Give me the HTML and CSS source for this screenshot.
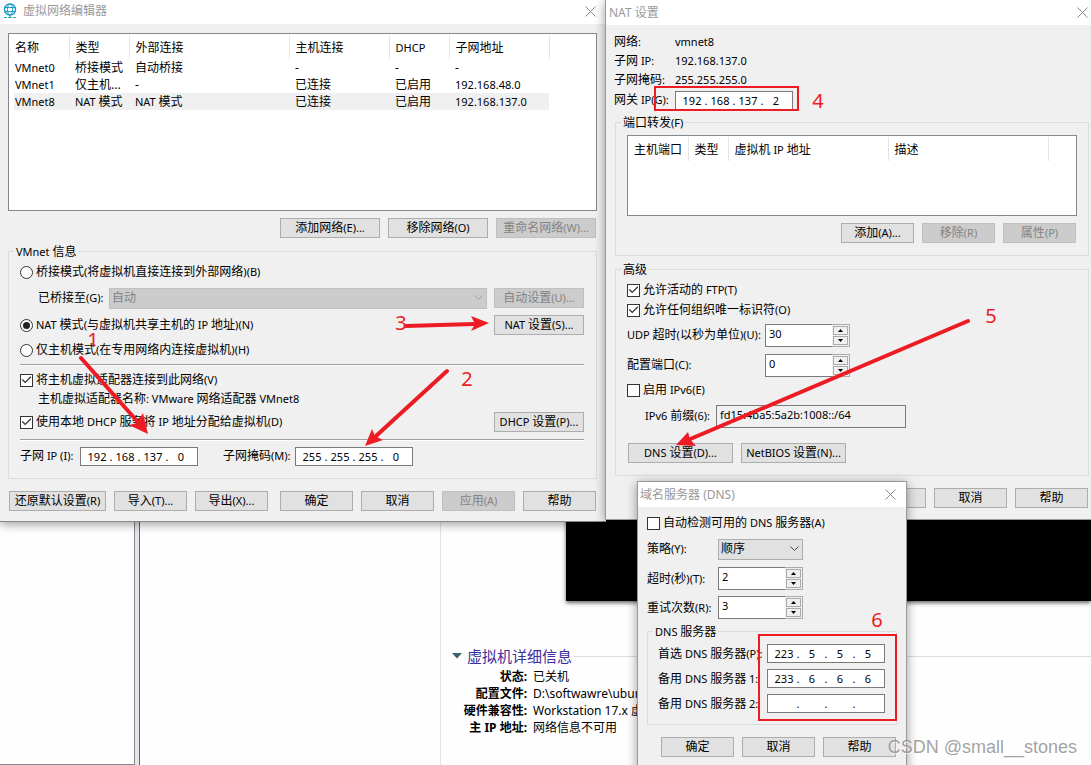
FILE: index.html
```html
<!DOCTYPE html>
<html lang="zh-CN">
<head>
<meta charset="utf-8">
<title>虚拟网络编辑器</title>
<link rel="stylesheet" href="styles.css">
</head>
<body>
<div class="desktop">

  <div class="workspace">
    <aside class="library"></aside>
    <div class="splitter"></div>
    <div class="devices"></div>
    <main class="summary">
      <div class="screen"></div>
      <section class="details">
        <h2 class="details-title">
          <svg width="10" height="6" viewBox="0 0 10 6" aria-hidden="true"><path d="M0 0h10L5 5.5z" fill="#41606e"/></svg>
          <span>虚拟机详细信息</span>
        </h2>
        <dl class="facts">
          <dt>状态:</dt><dd>已关机</dd>
          <dt>配置文件:</dt><dd>D:\softwawre\ubuntu</dd>
          <dt>硬件兼容性:</dt><dd>Workstation 17.x 虚拟机</dd>
          <dt>主 IP 地址:</dt><dd>网络信息不可用</dd>
        </dl>
      </section>
    </main>
  </div>

  <section class="window editor" aria-label="虚拟网络编辑器">
    <header class="titlebar">
      <svg class="app-icon" width="14" height="16" viewBox="0 0 14 16" fill="none" stroke="#1b9cc4" aria-hidden="true">
        <circle cx="7" cy="6.5" r="5.5" stroke-width="1.4"/>
        <ellipse cx="7" cy="6.5" rx="2.6" ry="5.5"/>
        <path d="M1.5 4.5h11M1.5 8.5h11M7 12v3"/>
        <path d="M1 14.5h3M5 14.5h4M10 14.5h3" stroke="#1fb39a"/>
      </svg>
      <h1 class="title">虚拟网络编辑器</h1>
      <button class="close" aria-label="关闭"><svg width="11" height="11" viewBox="0 0 11 11"><path d="M.5.5l10 10M10.5.5l-10 10" stroke="#8a8a8a"/></svg></button>
    </header>
    <div class="editor-body">
      <div class="list list-networks">
        <table class="table">
          <colgroup><col class="w60"><col class="w60"><col class="w160"><col class="w100"><col class="w60"><col class="w100"></colgroup>
          <thead><tr><th>名称</th><th>类型</th><th>外部连接</th><th>主机连接</th><th><span class="en">DHCP</span></th><th>子网地址</th></tr></thead>
          <tbody>
            <tr><td><span class="en">VMnet0</span></td><td>桥接模式</td><td>自动桥接</td><td>-</td><td>-</td><td>-</td></tr>
            <tr><td><span class="en">VMnet1</span></td><td>仅主机...</td><td>-</td><td>已连接</td><td>已启用</td><td><span class="en">192.168.48.0</span></td></tr>
            <tr class="selected"><td><span class="en">VMnet8</span></td><td><span class="en">NAT </span>模式</td><td><span class="en">NAT </span>模式</td><td>已连接</td><td>已启用</td><td><span class="en">192.168.137.0</span></td></tr>
          </tbody>
        </table>
      </div>
      <div class="buttons list-actions">
        <button class="btn w100">添加网络<span class="en">(E)...</span></button>
        <button class="btn w100">移除网络<span class="en">(O)</span></button>
        <button class="btn w100" disabled>重命名网络<span class="en">(W)...</span></button>
      </div>
      <fieldset class="group">
        <legend><span class="en">VMnet </span>信息</legend>
        <div class="info">
          <div class="row h24"><label class="option"><input type="radio" name="mode">桥接模式<span class="en">(</span>将虚拟机直接连接到外部网络<span class="en">)(B)</span></label></div>
          <div class="row h28 bridge">
            <label class="bridge-label" for="bridge">已桥接至<span class="en">(G):</span></label>
            <span class="combo combo-wide"><select id="bridge" disabled><option>自动</option></select><svg width="9" height="6" viewBox="0 0 9 6"><path d="M.5.5l4 4 4-4" fill="none" stroke="#a0a0a0"/></svg></span>
            <button class="btn w90" disabled>自动设置<span class="en">(U)...</span></button>
          </div>
          <div class="row h26 spread"><label class="option"><input type="radio" name="mode" checked><span class="en">NAT </span>模式<span class="en">(</span>与虚拟机共享主机的<span class="en"> IP </span>地址<span class="en">)(N)</span></label><button class="btn w90"><span class="en">NAT </span>设置<span class="en">(S)...</span></button></div>
          <div class="row h24"><label class="option"><input type="radio" name="mode">仅主机模式<span class="en">(</span>在专用网络内连接虚拟机<span class="en">)(H)</span></label></div>
          <hr class="rule rule-mode">
          <div class="row h20"><label class="option"><input type="checkbox" checked>将主机虚拟适配器连接到此网络<span class="en">(V)</span></label></div>
          <div class="row h18 indent">主机虚拟适配器名称<span class="en">: VMware </span>网络适配器<span class="en"> VMnet8</span></div>
          <div class="row h28 spread"><label class="option"><input type="checkbox" checked>使用本地<span class="en"> DHCP </span>服务将<span class="en"> IP </span>地址分配给虚拟机<span class="en">(D)</span></label><button class="btn w90"><span class="en">DHCP </span>设置<span class="en">(P)...</span></button></div>
          <hr class="rule rule-dhcp">
          <div class="row h30 subnet">
            <label for="subnet1">子网<span class="en"> IP (I):</span></label>
            <span class="ip"><input id="subnet1" value="192"><i>.</i><input aria-label="子网 IP 2" value="168"><i>.</i><input aria-label="子网 IP 3" value="137"><i>.</i><input aria-label="子网 IP 4" value="0"></span>
            <label class="mask-label" for="mask1">子网掩码<span class="en">(M):</span></label>
            <span class="ip"><input id="mask1" value="255"><i>.</i><input aria-label="掩码 2" value="255"><i>.</i><input aria-label="掩码 3" value="255"><i>.</i><input aria-label="掩码 4" value="0"></span>
          </div>
        </div>
      </fieldset>
      <div class="buttons editor-actions">
        <button class="btn w97">还原默认设置<span class="en">(R)</span></button>
        <button class="btn">导入<span class="en">(T)...</span></button>
        <button class="btn">导出<span class="en">(X)...</span></button>
        <span class="spacer"></span>
        <button class="btn">确定</button>
        <button class="btn">取消</button>
        <button class="btn" disabled>应用<span class="en">(A)</span></button>
        <button class="btn">帮助</button>
      </div>
    </div>
  </section>

  <section class="window nat" aria-label="NAT 设置">
    <header class="titlebar">
      <h1 class="title"><span class="ten">NAT </span>设置</h1>
      <button class="close" aria-label="关闭"><svg width="11" height="11" viewBox="0 0 11 11"><path d="M.5.5l10 10M10.5.5l-10 10" stroke="#8a8a8a"/></svg></button>
    </header>
    <div class="nat-body">
      <div class="nat-facts">
        <span>网络<span class="en">:</span></span><span class="en">vmnet8</span>
        <span>子网<span class="en"> IP:</span></span><span class="en">192.168.137.0</span>
        <span>子网掩码<span class="en">:</span></span><span class="en">255.255.255.0</span>
        <label for="gw1">网关<span class="en"> IP(G):</span></label>
        <span class="ip"><input id="gw1" value="192"><i>.</i><input aria-label="网关 2" value="168"><i>.</i><input aria-label="网关 3" value="137"><i>.</i><input aria-label="网关 4" value="2"></span>
      </div>
      <fieldset class="group group-forward">
        <legend>端口转发<span class="en">(F)</span></legend>
        <div class="forward">
          <div class="list list-ports">
            <table class="table">
              <colgroup><col class="w60"><col class="w40"><col class="w160"><col class="w160"></colgroup>
              <thead><tr><th>主机端口</th><th>类型</th><th>虚拟机<span class="en"> IP </span>地址</th><th>描述</th></tr></thead>
            </table>
          </div>
          <div class="buttons port-actions">
            <button class="btn">添加<span class="en">(A)...</span></button>
            <button class="btn" disabled>移除<span class="en">(R)</span></button>
            <button class="btn" disabled>属性<span class="en">(P)</span></button>
          </div>
        </div>
      </fieldset>
      <fieldset class="group group-advanced">
        <legend>高级</legend>
        <div class="advanced">
          <div class="row h20"><label class="option"><input type="checkbox" checked>允许活动的<span class="en"> FTP(T)</span></label></div>
          <div class="row h20"><label class="option"><input type="checkbox" checked>允许任何组织唯一标识符<span class="en">(O)</span></label></div>
          <div class="row h30"><label class="nat-label" for="udp"><span class="en">UDP </span>超时<span class="en">(</span>以秒为单位<span class="en">)(U):</span></label>
            <span class="spin"><input id="udp" value="30"><span class="arrows"><button aria-label="增加"><svg width="5" height="3"><path d="M0 3h5L2.500 0z"/></svg></button><button aria-label="减少"><svg width="5" height="3"><path d="M0 0h5L2.500 3z"/></svg></button></span></span></div>
          <div class="row h30"><label class="nat-label" for="port">配置端口<span class="en">(C):</span></label>
            <span class="spin"><input id="port" value="0"><span class="arrows"><button aria-label="增加"><svg width="5" height="3"><path d="M0 3h5L2.500 0z"/></svg></button><button aria-label="减少"><svg width="5" height="3"><path d="M0 0h5L2.500 3z"/></svg></button></span></span></div>
          <div class="row h20"><label class="option"><input type="checkbox">启用<span class="en"> IPv6(E)</span></label></div>
          <div class="row h32"><label class="prefix-label" for="prefix"><span class="en">IPv6 </span>前缀<span class="en">(6):</span></label><input class="prefix" id="prefix" value="fd15:4ba5:5a2b:1008::/64" readonly></div>
          <div class="buttons nat-more">
            <button class="btn w105"><span class="en">DNS </span>设置<span class="en">(D)...</span></button>
            <button class="btn w105"><span class="en">NetBIOS </span>设置<span class="en">(N)...</span></button>
          </div>
        </div>
      </fieldset>
      <div class="buttons nat-actions">
        <button class="btn">确定</button>
        <button class="btn">取消</button>
        <button class="btn">帮助</button>
      </div>
    </div>
  </section>

  <section class="window dns" aria-label="域名服务器 (DNS)">
    <header class="titlebar">
      <h1 class="title">域名服务器<span class="ten"> (DNS)</span></h1>
      <button class="close" aria-label="关闭"><svg width="11" height="11" viewBox="0 0 11 11"><path d="M.5.5l10 10M10.5.5l-10 10" stroke="#8a8a8a"/></svg></button>
    </header>
    <div class="dns-body">
      <div class="row h22"><label class="option"><input type="checkbox">自动检测可用的<span class="en"> DNS </span>服务器<span class="en">(A)</span></label></div>
      <div class="row h30"><label class="dns-label" for="policy">策略<span class="en">(Y):</span></label>
        <span class="combo combo-small"><select id="policy"><option>顺序</option></select><svg width="9" height="6" viewBox="0 0 9 6"><path d="M.5.5l4 4 4-4" fill="none" stroke="#444"/></svg></span></div>
      <div class="row h29"><label class="dns-label" for="timeout">超时<span class="en">(</span>秒<span class="en">)(T):</span></label>
        <span class="spin"><input id="timeout" value="2"><span class="arrows"><button aria-label="增加"><svg width="5" height="3"><path d="M0 3h5L2.500 0z"/></svg></button><button aria-label="减少"><svg width="5" height="3"><path d="M0 0h5L2.500 3z"/></svg></button></span></span></div>
      <div class="row h29"><label class="dns-label" for="retry">重试次数<span class="en">(R):</span></label>
        <span class="spin"><input id="retry" value="3"><span class="arrows"><button aria-label="增加"><svg width="5" height="3"><path d="M0 3h5L2.500 0z"/></svg></button><button aria-label="减少"><svg width="5" height="3"><path d="M0 0h5L2.500 3z"/></svg></button></span></span></div>
      <fieldset class="group group-dns">
        <legend><span class="en">DNS </span>服务器</legend>
        <div class="servers">
          <div class="row h25"><label class="server-label" for="p1">首选<span class="en"> DNS </span>服务器<span class="en">(P):</span></label>
            <span class="ip"><input id="p1" value="223"><i>.</i><input aria-label="首选 2" value="5"><i>.</i><input aria-label="首选 3" value="5"><i>.</i><input aria-label="首选 4" value="5"></span></div>
          <div class="row h25"><label class="server-label" for="a1">备用<span class="en"> DNS </span>服务器<span class="en"> 1:</span></label>
            <span class="ip"><input id="a1" value="233"><i>.</i><input aria-label="备用一 2" value="6"><i>.</i><input aria-label="备用一 3" value="6"><i>.</i><input aria-label="备用一 4" value="6"></span></div>
          <div class="row h25"><label class="server-label" for="b1">备用<span class="en"> DNS </span>服务器<span class="en"> 2:</span></label>
            <span class="ip"><input id="b1"><i>.</i><input aria-label="备用二 2"><i>.</i><input aria-label="备用二 3"><i>.</i><input aria-label="备用二 4"></span></div>
        </div>
      </fieldset>
      <div class="buttons dns-actions">
        <button class="btn">确定</button>
        <button class="btn">取消</button>
        <button class="btn">帮助</button>
      </div>
    </div>
  </section>

  <svg class="marks" width="1091" height="765" viewBox="0 0 1091 765">
    <g fill="none" stroke="#ed1c24" stroke-width="2">
      <rect x="655" y="87" width="143" height="23"/>
      <rect x="759" y="635" width="137" height="85"/>
    </g>
    <g stroke="#ed1c24" stroke-width="4" stroke-linecap="round">
      <path d="M81 358L137 421M447 371L376 436M406 326L474 324M968 321L688 440"/>
    </g>
    <g fill="#ed1c24">
      <path d="M148 434L129 425L137 423L143 413z"/>
      <path d="M365 446L372 429L375 436L383 440z"/>
      <path d="M489 323L471 331L475 324L471 316z"/>
      <path d="M676 445L688 432L690 439L696 446z"/>
    </g>
    <g class="digits" text-anchor="middle">
      <text x="93" y="347">1</text><text x="467" y="386">2</text><text x="401" y="330">3</text>
      <text x="818" y="108">4</text><text x="991" y="323">5</text><text x="877" y="627">6</text>
    </g>
  </svg>
  <div class="watermark">CSDN @small__stones</div>
</div>
</body>
</html>
```

FILE: styles.css
```css
* { box-sizing: border-box; }

body {
  margin: 0;
  overflow: hidden;
  background: #fff;
  color: #000;
  font: 12px/16px "Noto Sans", "Noto Sans CJK SC", sans-serif;
}

button, input, select { font: inherit; color: inherit; margin: 0; }

.en { font-size: 11px; white-space: pre; }
.ten { font-size: 12px; white-space: pre; }

.desktop { position: relative; min-height: 100vh; overflow: hidden; }

/* Main window behind the dialogs */
.workspace { display: flex; height: 100vh; background: #fefefe; }
.library { width: 135px; border-right: 1px solid #828790; border-bottom: 1px solid #828790; }
.splitter { width: 5px; background: #e3e5e9; border-right: 1px solid #646464; }
.devices { width: 301px; border-right: 1px solid #e2e2e2; }
.summary { flex: 1; padding-top: 500px; min-width: 0; }
.screen { height: 101px; margin-left: 125px; background: #000; box-shadow: 0 2px 4px #0009; }
.details { margin: 45px 0 0 11px; }
.details-title {
  display: flex;
  align-items: center;
  gap: 5px;
  margin: 0;
  color: #3c2f9c;
  font-size: 15px;
  font-weight: 400;
  line-height: 20px;
}
.details-title::after { content: ""; flex: 1; margin-left: -3px; border-top: 1px solid #ddd; }
.facts { display: grid; grid-template-columns: 75px 1fr; column-gap: 6px; margin: 2px 0 0; line-height: 17px; white-space: nowrap; }
.facts dt { text-align: right; font-weight: 700; }
.facts dd { margin: 0; }

/* Dialog windows */
.window { position: absolute; background: #f0f0f0; box-shadow: 0 2px 10px #0006; white-space: nowrap; }
.editor { left: 0; top: 0; width: 606px; border-bottom: 1px solid #888; }
.nat { left: 605px; top: 0; right: 0; border-left: 1px solid #999; border-bottom: 1px solid #999; }
.dns { left: 637px; top: 481px; width: 270px; border: 1px solid #999; border-bottom: 0; }

.titlebar { display: flex; align-items: center; height: 24px; background: #fff; padding: 0 10px 2px 3px; }
.nat .titlebar { height: 25px; padding: 0 3px 0 3px; }
.dns .titlebar { height: 25px; padding: 0 10px 0 2px; }
.app-icon { margin-right: 6px; }
.title { flex: 1; margin: 0; color: #999; font-size: 12px; font-weight: 400; line-height: 16px; }
.close { display: flex; padding: 0; border: 0; background: none; }

/* Controls */
.buttons { display: flex; justify-content: flex-end; gap: 8px; }
.btn {
  width: 73px;
  height: 20px;
  padding: 0;
  border: 1px solid #adadad;
  background: #e1e1e1;
  line-height: 18px;
  text-align: center;
  white-space: nowrap;
}
.btn:disabled { border-color: #bfbfbf; background: #ccc; color: #838383; }
.btn.w90 { width: 90px; }
.btn.w97 { width: 97px; }
.btn.w100 { width: 100px; }
.btn.w105 { width: 105px; }

.list { border: 1px solid #828790; background: #fff; padding: 1px 0; overflow: hidden; }
.table { table-layout: fixed; width: 0; border-collapse: collapse; }
col.w40 { width: 40px; }
col.w60 { width: 60px; }
col.w100 { width: 100px; }
col.w160 { width: 160px; }
.table th { height: 24px; padding: 1px 0 0 6px; border-right: 1px solid #e5e5e5; font-weight: 400; text-align: left; }
.table td { height: 17px; padding: 1px 0 0 6px; line-height: 16px; }
.selected td { background: #f0f0f0; }
.selected td:first-child { background: linear-gradient(to right, #fff 5px, #f0f0f0 5px); }

.group { min-width: 0; margin: 0; padding: 0; border: 1px solid #dcdcdc; }
.group legend { margin-left: 5px; padding: 1px 2px 0; height: 16px; line-height: 16px; }

.row { display: flex; align-items: center; }
.spread { justify-content: space-between; }
.h18 { height: 18px; }
.h20 { height: 20px; }
.h22 { height: 22px; }
.h24 { height: 24px; }
.h25 { height: 25px; }
.h26 { height: 26px; }
.h28 { height: 28px; }
.h29 { height: 29px; }
.h30 { height: 30px; }
.h32 { height: 32px; }

.option { display: flex; align-items: center; }
.option input {
  appearance: none;
  display: grid;
  place-items: center;
  width: 13px;
  height: 13px;
  margin-right: 3px;
  border: 1px solid #333;
  background: #fff;
}
.option input[type="radio"] { border-radius: 50%; }
.option input[type="radio"]:checked::before { content: ""; width: 7px; height: 7px; border-radius: 50%; background: #222; }
.option input[type="checkbox"]:checked::before {
  content: "";
  width: 11px;
  height: 11px;
  background: #333;
  clip-path: polygon(8% 50%, 16% 42%, 38% 64%, 86% 16%, 94% 24%, 38% 80%);
}

.combo { display: grid; align-items: center; height: 21px; }
.combo select, .combo svg { grid-area: 1 / 1; }
.combo svg { justify-self: end; margin-right: 4px; pointer-events: none; }
.combo select {
  appearance: none;
  width: 100%;
  height: 21px;
  padding: 0 2px;
  border: 1px solid #adadad;
  border-radius: 0;
  background: #e1e1e1;
  opacity: 1;
}
.combo select:disabled { border-color: #bfbfbf; background: #ccc; color: #838383; }
.combo-wide { flex: 1; margin-right: 7px; }
.combo-small { width: 85px; }

.ip { display: flex; align-items: center; width: 118px; height: 19px; padding: 1px 2px 0 4px; border: 1px solid #7a7a7a; background: #fff; font-size: 11px; }
.ip input { width: 24px; height: 16px; padding: 0; border: 0; background: none; text-align: center; }
.ip i { width: 4px; font-style: normal; text-align: center; }

.spin { display: flex; width: 85px; height: 23px; border: 1px solid #ababab; font-size: 11px; }
.spin input { width: 67px; height: 23px; margin: -1px 0 0 -1px; padding: 0 3px 4px; border: 1px solid #7a7a7a; border-right: 0; border-radius: 0; background: #fff; }
.arrows { display: grid; gap: 1px; padding: 1px; }
.arrows button { display: grid; place-items: center; width: 15px; height: 9px; padding: 0; border: 1px solid #ababab; background: #f0f0f0; }

/* Virtual network editor */
.editor-body { padding: 9px 9px 10px 8px; }
.list-networks { height: 178px; }
.list-actions { padding: 7px 1px 5px 0; }
.info { padding: 1px 12px 7px 11px; }
.bridge-label { width: 89px; padding-left: 18px; }
.indent { padding-left: 18px; }
.rule { height: 2px; margin: 0; border: 0; border-top: 1px solid #a0a0a0; background: #fff; }
.rule-mode { margin: 2px 0 4px; }
.rule-dhcp { margin-top: 3px; }
.subnet label { width: 60px; }
.subnet .mask-label { width: 72px; margin-left: 25px; }
.editor-actions { padding: 12px 1px 0; }
.spacer { width: 4px; margin-right: -8px; }

/* NAT settings */
.nat-body { padding: 7px 2px 11px 8px; }
.nat-facts { display: grid; grid-template-columns: 61px 118px; grid-template-rows: 19px 19px 19px 22px; align-items: center; }
.group-forward { margin: 3px 0 0 1px; }
.forward { padding: 5px 11px 12px 11px; }
.list-ports { height: 81px; margin-bottom: 7px; }
.port-actions { padding-right: 1px; }
.group-advanced { margin: 5px 0 0 1px; }
.advanced { padding: 3px 11px 12px; }
.nat-label { width: 138px; }
.prefix-label { width: 89px; padding-left: 18px; }
.prefix { width: 190px; height: 23px; padding: 0 3px 3px; border: 1px solid #7a7a7a; background: #f0f0f0; font-size: 11px; }
.nat-more { justify-content: flex-start; margin-top: 11px; padding-left: 1px; }
.nat-actions { padding: 12px 1px 0 0; }

/* DNS servers */
.dns-body { padding: 5px 9px 20px; }
.dns-label { width: 71px; }
.group-dns { margin-top: 1px; }
.servers { padding: 2px 10px 8px; }
.server-label { width: 109px; }
.server-label + .ip { flex: none; }
.dns-actions { padding: 12px 1px 0 0; }

/* Annotations */
.marks { position: absolute; left: 0; top: 0; pointer-events: none; }
.digits { fill: #ed1c24; font-size: 20px; }
.watermark { position: absolute; right: 14px; bottom: 8px; color: #8a8a8acc; font: 18px/20px "Liberation Sans", sans-serif; text-shadow: 1px 1px 0 #fff9; }
```
